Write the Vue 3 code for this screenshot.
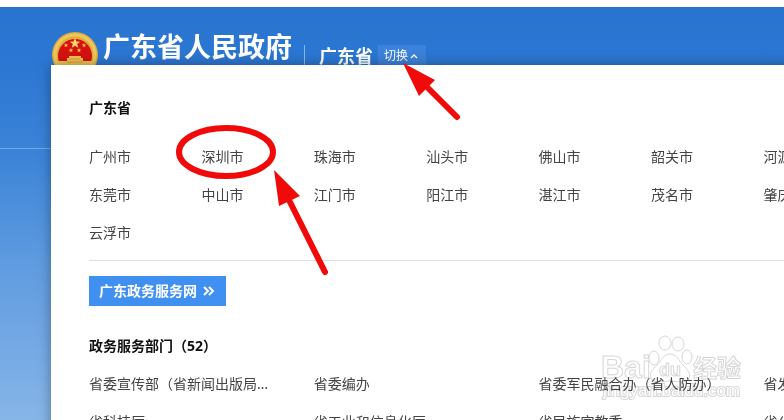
<script setup>
import { ref } from 'vue'

const province = ref('广东省')

const cityRows = [
    ['广州市', '深圳市', '珠海市', '汕头市', '佛山市', '韶关市', '河源市'],
    ['东莞市', '中山市', '江门市', '阳江市', '湛江市', '茂名市', '肇庆市'],
    ['云浮市'],
]

const departmentRows = [
    ['省委宣传部（省新闻出版局…', '省委编办', '省委军民融合办（省人防办）', '省发展改革委'],
    ['省科技厅', '省工业和信息化厅', '省民族宗教委', '省公安厅'],
]
</script>

<template>
    <div class="page">
        <header class="site_header">
            <svg class="emblem" viewBox="0 0 48 48" aria-hidden="true">
                <circle cx="24" cy="24" r="23" fill="#dfae3f" />
                <circle cx="24" cy="24" r="20" fill="none" stroke="#eec75c" stroke-width="3" />
                <circle cx="24" cy="25" r="17" fill="#d5120f" />
                <path d="M24 7l1.4 3.5 3.8.2-3 2.4 1 3.7-3.2-2.1-3.2 2.1 1-3.7-3-2.4 3.8-.2z" fill="#f8d868" />
                <g fill="#f8c94c">
                    <path id="star" d="M15 12l.6 1.5 1.7.1-1.3 1 .4 1.6-1.4-.9-1.4.9.4-1.6-1.3-1 1.7-.1z" />
                    <use href="#star" x="18" />
                    <use href="#star" x="5" y="5" />
                    <use href="#star" x="13" y="5" />
                </g>
                <path d="M18 25h12v2h2v3h10v5H6v-5h10v-3h2z" fill="#efc552" />
                <path d="M18 28h12M16 31h16" stroke="#dba136" />
                <path d="M8 37h32l-5 6H13z" fill="#d5120f" />
            </svg>
            <h1>广东省人民政府</h1>
            <div class="region">
                <strong>{{ province }}</strong>
                <button type="button" class="switch">
                    切换
                    <svg viewBox="0 0 8 5" aria-hidden="true">
                        <path d="M1 4l3-3 3 3" fill="none" stroke="#fff" stroke-width="1.4" />
                    </svg>
                </button>
            </div>
        </header>

        <main class="panel">
            <h2>{{ province }}</h2>
            <ul v-for="(row, i) in cityRows" :key="i" class="cities">
                <li v-for="city in row" :key="city"><a href="#">{{ city }}</a></li>
            </ul>
            <div class="service">
                <a href="#" class="service_link">
                    广东政务服务网
                    <svg viewBox="0 0 12 10" aria-hidden="true">
                        <path d="M1 1l4 4-4 4M6 1l4 4-4 4" fill="none" stroke="#fff" stroke-width="2" />
                    </svg>
                </a>
            </div>
            <h2>政务服务部门（52）</h2>
            <ul v-for="(row, i) in departmentRows" :key="i" class="departments">
                <li v-for="item in row" :key="item"><a href="#">{{ item }}</a></li>
            </ul>
        </main>

        <svg class="marks" width="784" height="420" viewBox="0 0 784 420" aria-hidden="true">
            <g fill="none" stroke="#f00a0a" stroke-linecap="round">
                <ellipse cx="226" cy="152" rx="47" ry="24" stroke-width="6" />
                <path d="M290 202l35 70M426 86l31 31" stroke-width="6" />
            </g>
            <path d="M274 170l26 26-21 10zM403 63l32 17-16 16z" fill="#f00a0a" />
        </svg>

        <svg class="watermark" width="150" height="72" viewBox="0 0 150 72" aria-hidden="true">
            <text x="3" y="44" class="brand">Bai</text>
            <ellipse cx="56" cy="24" rx="5" ry="7" />
            <ellipse cx="67" cy="9" rx="6" ry="7" />
            <ellipse cx="80" cy="10" rx="6" ry="7" />
            <ellipse cx="89" cy="23" rx="5" ry="7" />
            <path d="M72 20c7 0 9 7 13 11s8 8 6 13-8 4-19 3c-11 1-17 2-19-3s2-9 6-13 6-11 13-11z" />
            <text x="61" y="42" class="du">du</text>
            <text x="95" y="43" class="cn">经验</text>
            <text x="5" y="62" class="url">jingyan.baidu.com</text>
        </svg>
    </div>
</template>

<style>
body {
    margin: 0;
    overflow: hidden;
}
</style>

<style scoped>
.page {
    position: relative;
    box-sizing: border-box;
    height: 100vh;
    overflow: hidden;
    border-top: 7px solid #fff;
    display: flex;
    flex-direction: column;
    color: #444;
    font-family: "Noto Sans", "Noto Sans CJK SC", sans-serif;
    font-size: 14px;
    background:
        linear-gradient(#74a9e5, #74a9e5) 0 141px / 100% 1px no-repeat,
        linear-gradient(#2874cf 0, #2c77d3 60px, #3d84d8 150px, #609ce0 260px, #86b5e8 100%);
}
h1,
h2,
ul {
    margin: 0;
    padding: 0;
    list-style: none;
}
a {
    color: inherit;
    text-decoration: none;
}
.site_header {
    display: flex;
    align-items: flex-start;
    box-sizing: border-box;
    flex: none;
    height: 58px;
    padding: 24px 0 0 51px;
    overflow: hidden;
    color: #fff;
}
.emblem {
    flex: none;
    width: 48px;
    height: 48px;
}
h1 {
    margin-left: 4px;
    font-size: 27px;
    line-height: 32px;
    white-space: nowrap;
}
.region {
    display: flex;
    align-items: flex-start;
    margin: 14px 0 0 12px;
    padding-left: 14px;
    border-left: 1px solid #8db8ec;
    white-space: nowrap;
}
.region strong {
    font-size: 18px;
    line-height: 22px;
}
.switch {
    display: flex;
    align-items: center;
    gap: 2px;
    margin-left: 5px;
    padding: 0 8px 0 6px;
    border: 0;
    color: #fff;
    background: #3c82da;
    font: inherit;
    font-size: 12px;
    line-height: 22px;
    cursor: pointer;
}
.switch svg {
    width: 8px;
    height: 5px;
}
.panel {
    box-sizing: border-box;
    flex: 1;
    min-width: 1200px;
    margin-left: 51px;
    padding: 31px 38px 0;
    background: #fff;
    box-shadow: 0 0 12px rgba(0, 0, 0, .35);
}
h2 {
    margin-bottom: 18px;
    color: #111;
    font-size: 14px;
    line-height: 24px;
}
.cities,
.departments {
    display: grid;
    grid-template-columns: repeat(10, 1fr);
    line-height: 38px;
    white-space: nowrap;
}
.departments {
    grid-template-columns: repeat(5, 1fr);
}
.service {
    margin: 8px 0 28px;
    padding-top: 15px;
    border-top: 1px solid #ddd;
}
.service_link {
    display: inline-flex;
    align-items: center;
    gap: 6px;
    padding: 0 11px 0 10px;
    color: #fff;
    background: #4090f2;
    font-weight: bold;
    line-height: 30px;
}
.service_link svg {
    width: 12px;
    height: 10px;
}
.service + h2 {
    margin-bottom: 7px;
}
.marks {
    position: absolute;
    top: -7px;
    left: 0;
    pointer-events: none;
}
.watermark {
    position: absolute;
    right: 36px;
    bottom: 14px;
    pointer-events: none;
    mix-blend-mode: multiply;
    fill: #fff;
    stroke: #d6d6d6;
    stroke-width: 1;
    font-family: "Liberation Sans", "Noto Sans CJK SC", sans-serif;
    font-weight: bold;
}
.brand {
    font-size: 32px;
}
.du {
    font-size: 18px;
}
.cn {
    font-size: 24px;
}
.url {
    font-size: 17px;
    font-weight: normal;
    paint-order: stroke;
    stroke-width: 2;
}
</style>
